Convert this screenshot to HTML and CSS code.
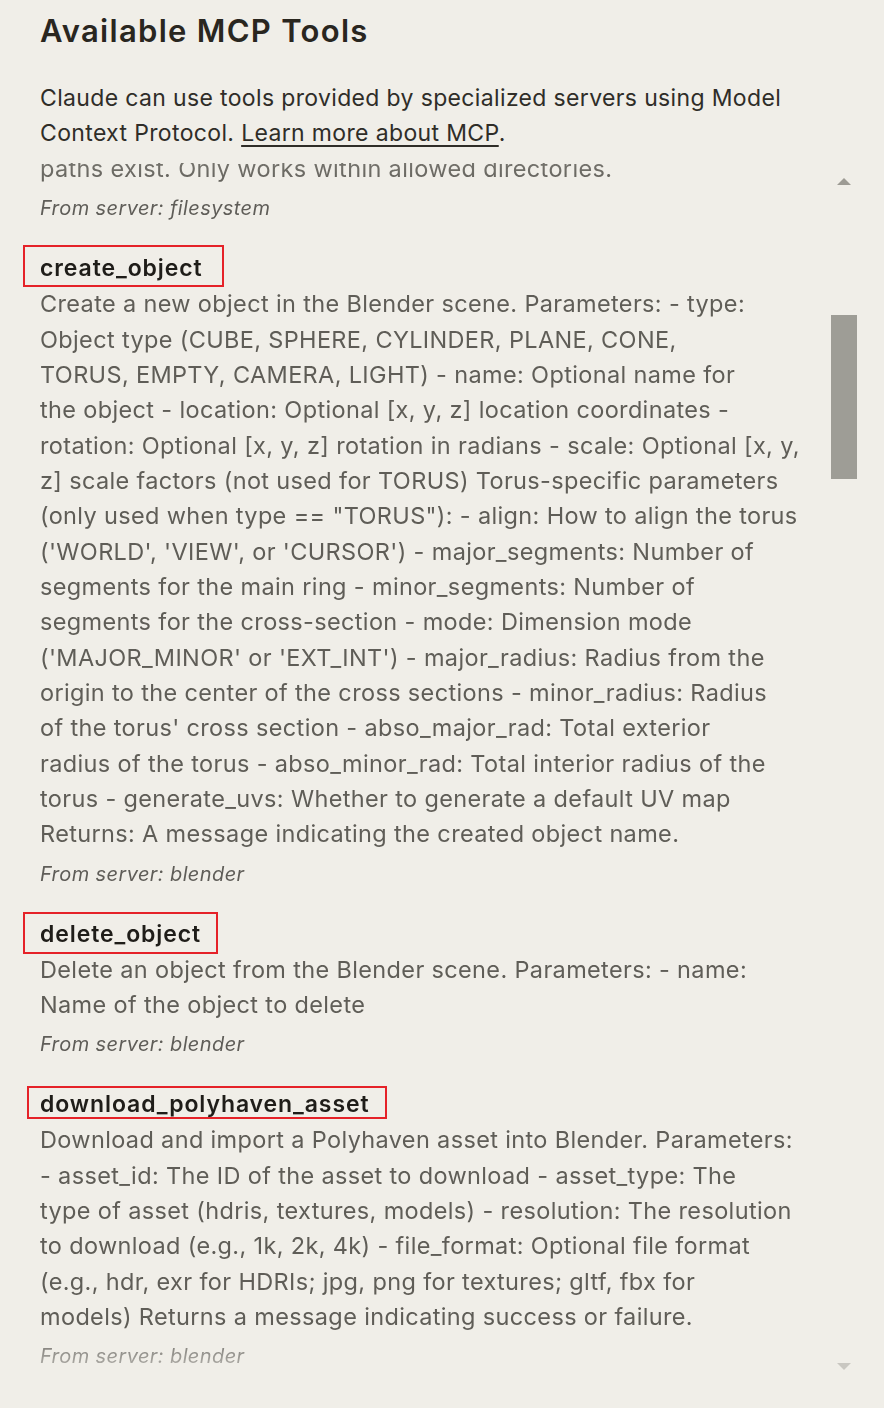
FILE: index.html
```html
<!DOCTYPE html>
<html lang="en">
<head>
<meta charset="utf-8">
<title>Available MCP Tools</title>
<link rel="stylesheet" href="styles.css">
</head>
<body>
<main class="panel">
  <h1 class="title">Available MCP Tools</h1>
  <p class="intro">Claude can use tools provided by specialized servers using Model<br>Context Protocol. <a class="link" href="#">Learn more about MCP</a>.</p>

  <div class="scroll">
    <div class="scroll-content">
      <section class="tool tool-first">
        <p class="desc">paths exist. Only works within allowed directories.</p>
        <p class="server">From server: filesystem</p>
      </section>

      <section class="tool">
        <h2 class="tool-name mark-create">create_object</h2>
        <p class="desc">Create a new object in the Blender scene. Parameters: - type:<br>Object type (CUBE, SPHERE, CYLINDER, PLANE, CONE,<br>TORUS, EMPTY, CAMERA, LIGHT) - name: Optional name for<br>the object - location: Optional [x, y, z] location coordinates -<br>rotation: Optional [x, y, z] rotation in radians - scale: Optional [x, y,<br>z] scale factors (not used for TORUS) Torus-specific parameters<br>(only used when type == "TORUS"): - align: How to align the torus<br>('WORLD', 'VIEW', or 'CURSOR') - major_segments: Number of<br>segments for the main ring - minor_segments: Number of<br>segments for the cross-section - mode: Dimension mode<br>('MAJOR_MINOR' or 'EXT_INT') - major_radius: Radius from the<br>origin to the center of the cross sections - minor_radius: Radius<br>of the torus' cross section - abso_major_rad: Total exterior<br>radius of the torus - abso_minor_rad: Total interior radius of the<br>torus - generate_uvs: Whether to generate a default UV map<br>Returns: A message indicating the created object name.</p>
        <p class="server">From server: blender</p>
      </section>

      <section class="tool">
        <h2 class="tool-name mark-delete">delete_object</h2>
        <p class="desc">Delete an object from the Blender scene. Parameters: - name:<br>Name of the object to delete</p>
        <p class="server">From server: blender</p>
      </section>

      <section class="tool">
        <h2 class="tool-name mark-download">download_polyhaven_asset</h2>
        <p class="desc">Download and import a Polyhaven asset into Blender. Parameters:<br>- asset_id: The ID of the asset to download - asset_type: The<br>type of asset (hdris, textures, models) - resolution: The resolution<br>to download (e.g., 1k, 2k, 4k) - file_format: Optional file format<br>(e.g., hdr, exr for HDRIs; jpg, png for textures; gltf, fbx for<br>models) Returns a message indicating success or failure.</p>
        <p class="server">From server: blender</p>
      </section>
    </div>

    <div class="scrollbar" aria-hidden="true">
      <span class="arrow arrow-up"></span>
      <span class="thumb"></span>
      <span class="arrow arrow-down"></span>
    </div>
  </div>
</main>
</body>
</html>
```

FILE: styles.css
```css
html, body {
  margin: 0;
  padding: 0;
  background: #f0eee8;
}

body {
  font-family: Inter, "Liberation Sans", sans-serif;
  color: #2f2d28;
}

.panel {
  padding: 11px 0 0 40px;
}

.title {
  margin: 0;
  font-size: 31px;
  line-height: 40px;
  font-weight: 600;
  letter-spacing: 1.3px;
  color: #29261f;
}

.intro {
  margin: 30px 0 0;
  font-size: 23px;
  line-height: 35px;
  letter-spacing: 0.35px;
  color: #2f2d28;
}

.link {
  color: inherit;
  text-decoration: underline;
  text-underline-offset: 4px;
  text-decoration-thickness: 2px;
}

.scroll {
  margin-top: 11.5px;
  margin-left: -20px;
  height: 1211px;
  display: flex;
  overflow: hidden;
}

.scroll-content {
  width: 791px;
  flex: none;
  padding-left: 20px;
  -webkit-mask-image: linear-gradient(to bottom, rgba(0,0,0,0.85) 0, #000 24px, #000 calc(100% - 46px), rgba(0,0,0,0.45) calc(100% - 8px));
  mask-image: linear-gradient(to bottom, rgba(0,0,0,0.85) 0, #000 24px, #000 calc(100% - 46px), rgba(0,0,0,0.45) calc(100% - 8px));
}

.tool {
  margin-top: 28px;
}

.tool-first {
  margin-top: -11.5px;
}

.tool-name {
  position: relative;
  margin: 0;
  font-size: 23px;
  line-height: 36px;
  font-weight: 600;
  letter-spacing: 0.9px;
  color: #1f1d19;
}

.tool-name::after {
  content: "";
  position: absolute;
  border: 2px solid #e52228;
  box-sizing: border-box;
}

.mark-create::after {
  left: -17px;
  top: -5px;
  width: 201px;
  height: 42px;
}

.mark-delete::after {
  left: -17px;
  top: -4px;
  width: 195px;
  height: 42px;
}

.mark-download::after {
  left: -13px;
  top: 0;
  width: 360px;
  height: 33px;
}

.desc {
  margin: 0;
  font-size: 23.5px;
  line-height: 35.33px;
  letter-spacing: 0.35px;
  color: #5f5d57;
  white-space: nowrap;
}

.server {
  margin: 8px 0 0;
  font-size: 20px;
  line-height: 28px;
  letter-spacing: 0.4px;
  font-style: italic;
  color: #5f5d58;
}

.scrollbar {
  width: 26px;
  flex: none;
  display: flex;
  flex-direction: column;
  align-items: center;
}

.arrow {
  width: 0;
  height: 0;
  border-left: 7px solid transparent;
  border-right: 7px solid transparent;
}

.arrow-up {
  margin-top: 15px;
  border-bottom: 7px solid #9d9b94;
}

.arrow-down {
  margin-top: auto;
  margin-bottom: 4px;
  border-top: 7px solid #c9c7c1;
}

.thumb {
  margin-top: 130px;
  width: 26px;
  height: 164px;
  background: #9e9d96;
}
```
